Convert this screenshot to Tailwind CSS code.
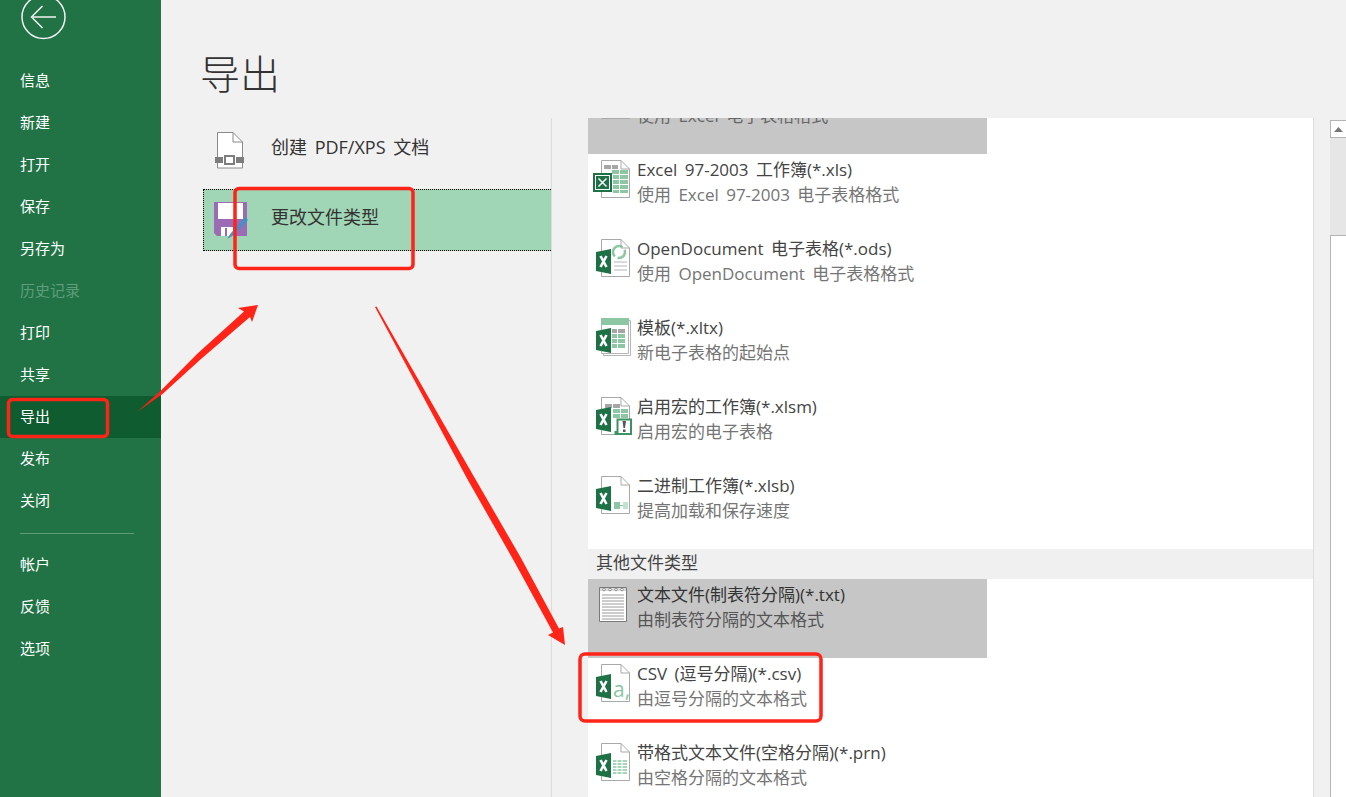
<!DOCTYPE html>
<html lang="zh-CN">
<head>
  <meta charset="UTF-8">
  <meta name="viewport" content="width=device-width, initial-scale=1.0">
  <title>导出</title>
  <script src="https://cdn.jsdelivr.net/npm/@tailwindcss/browser@4"></script>
</head>
<body class="relative w-[1346px] h-[797px] overflow-hidden bg-[#f1f1f1] [font-family:'Open_Sans','Noto_Sans_CJK_SC',sans-serif]">

<!-- shared icon parts -->
<svg class="hidden">
  <defs>
    <symbol id="page" viewBox="0 0 36 40">
      <path d="M6.500 1.500H26L34.500 10V38.500H6.500Z" fill="#fff" stroke="#a9a9a9"/>
      <path d="M26 1.500V10H34.500" fill="none" stroke="#a9a9a9"/>
    </symbol>
    <symbol id="badge" viewBox="0 0 36 40">
      <path d="M1 14L16 11V36L1 33Z" fill="#1e7145"/>
      <path d="M5.500 18L11.500 29M11.500 18L5.500 29" stroke="#fff" stroke-width="2.600" fill="none"/>
    </symbol>
  </defs>
</svg>

<div class="flex h-full">
  <!-- sidebar -->
  <nav class="w-[161px] shrink-0 h-full bg-[#217346] text-white text-[15px]">
    <div class="h-[59px] pl-[21px] -mt-[5px] pt-0">
      <svg width="46" height="46" viewBox="0 0 46 46" fill="none" stroke="#f2f2f2" stroke-width="1.500">
        <circle cx="22.500" cy="22" r="21.500"/>
        <path d="M12 22H35M21.500 11L10.500 22L21.500 33"/>
      </svg>
    </div>
    <ul class="mt-[6px]">
      <li class="h-[42px] pl-5 pb-[2px] flex items-center">信息</li>
      <li class="h-[42px] pl-5 pb-[2px] flex items-center">新建</li>
      <li class="h-[42px] pl-5 pb-[2px] flex items-center">打开</li>
      <li class="h-[42px] pl-5 pb-[2px] flex items-center">保存</li>
      <li class="h-[42px] pl-5 pb-[2px] flex items-center">另存为</li>
      <li class="h-[42px] pl-5 pb-[2px] flex items-center text-[#5f9d7b]">历史记录</li>
      <li class="h-[42px] pl-5 pb-[2px] flex items-center">打印</li>
      <li class="h-[42px] pl-5 pb-[2px] flex items-center">共享</li>
      <li class="h-[42px] pl-5 pb-[2px] flex items-center bg-[#0e5c2f]">导出</li>
      <li class="h-[42px] pl-5 pb-[2px] flex items-center">发布</li>
      <li class="h-[42px] pl-5 pb-[2px] flex items-center">关闭</li>
    </ul>
    <div class="ml-5 w-[114px] mt-[11px] mb-[10px] border-t border-[#5d9a78]"></div>
    <ul>
      <li class="h-[42px] pl-5 pb-[2px] flex items-center">帐户</li>
      <li class="h-[42px] pl-5 pb-[2px] flex items-center">反馈</li>
      <li class="h-[42px] pl-5 pb-[2px] flex items-center">选项</li>
    </ul>
  </nav>

  <!-- main -->
  <main class="flex-1 min-w-0 flex flex-col">
    <h1 class="h-[118px] shrink-0 pl-[39px] pt-[44px] text-[40px] leading-[60px] font-light text-[#333]">导出</h1>

    <div class="flex flex-1 min-h-0">
      <!-- export options -->
      <div class="w-[391px] shrink-0 pl-[42px] border-r border-[#dcdcdc]">
        <div class="h-[71px] flex items-center text-[18px] text-[#333]">
          <svg class="ml-[12px] mr-[27px] -mt-[6px]" width="29" height="37" viewBox="0 0 29 37" fill="none">
            <path d="M2.500 .5H18L27.500 10V36H2.500Z" fill="#fff" stroke="#8a8a8a"/>
            <path d="M18 .5V10H27.500" stroke="#8a8a8a"/>
            <path d="M0 25H8V31H0ZM21 25H29V31H21Z" fill="#7d7d7d"/>
            <path d="M10 24H19V32H10Z" fill="#fff" stroke="#7d7d7d" stroke-width="2"/>
          </svg>
          <span class="-mt-[12px] [word-spacing:3px]">创建 PDF/XPS 文档</span>
        </div>
        <div class="h-[62px] flex items-center text-[18px] text-[#333] bg-[#a0d5b5] border border-dotted border-black border-r-0">
          <svg class="ml-[10px] mr-[24px] -mt-[1px] overflow-visible" width="33" height="35" viewBox="0 0 33 35">
            <path d="M0 0H33V34H3L0 31Z" fill="#9c6bb6"/>
            <path d="M4 1H29V17H4Z" fill="#fff"/>
            <path d="M7 25H19V34H7Z" fill="#fff"/>
            <path d="M11 26H13V34H11Z" fill="#9c6bb6"/>
            <path d="M13 37L17 31L31 15L34 18L20 33Z" fill="#4a8fc4"/>
          </svg>
          <span class="-mt-[5px]">更改文件类型</span>
        </div>
      </div>

      <!-- file types -->
      <div class="w-[726px] shrink-0 ml-[36px] bg-white border-r border-[#dcdcdc] overflow-hidden text-[17px] leading-[25px] [word-spacing:3px]">
        <div class="-mt-[43px]">
          <div class="w-[399px] h-[79px] pl-[7px] pt-[3px] flex gap-[6px] bg-[#c6c6c6]">
            <svg class="mt-[2px]" width="36" height="40"><use href="#page"/><use href="#badge"/></svg>
            <div class="pt-[25px]"><p class="text-[#666]">使用 Excel 电子表格格式</p></div>
          </div>

          <div class="w-[399px] h-[79px] pl-[7px] pt-[3px] flex gap-[6px]">
            <svg class="mt-[2px] overflow-visible" width="36" height="40" viewBox="0 0 36 40">
              <use href="#page"/>
              <path d="M9 6H16V10H9ZM17 6H23V10H17Z" fill="#a6a6a6"/>
              <path d="M17 11H24V15H17ZM25 11H33V15H25ZM18 16H24V20H18ZM25 16H33V20H25ZM18 21H24V25H18ZM25 21H33V25H25ZM18 26H24V30H18ZM25 26H33V30H25ZM18 31H24V34H18ZM25 31H33V34H25Z" fill="#8cc6a3"/>
              <path d="M-1 15H16V32H-1Z" fill="#fff" stroke="#1e7145" stroke-width="2"/>
              <path d="M1 17H14V30H1Z" fill="#1e7145"/>
              <path d="M3.500 19.500L11.500 27.500M11.500 19.500L3.500 27.500" stroke="#fff" stroke-width="1.500"/>
            </svg>
            <div><p class="text-[#444]">Excel 97-2003 工作簿(*.xls)</p><p class="text-[#757575]">使用 Excel 97-2003 电子表格格式</p></div>
          </div>

          <div class="w-[399px] h-[79px] pl-[7px] pt-[3px] flex gap-[6px]">
            <svg class="mt-[2px]" width="36" height="40" viewBox="0 0 36 40">
              <use href="#page"/>
              <path d="M18 14A6 6 0 0 1 30 14A6 6 0 0 1 18 14" fill="none" stroke="#8cc6a3" stroke-width="2.500" stroke-dasharray="13 3"/>
              <path d="M19 24H32M19 28H32M19 32H32" stroke="#b5b5b5"/>
              <use href="#badge"/>
            </svg>
            <div><p class="text-[#444]">OpenDocument 电子表格(*.ods)</p><p class="text-[#757575]">使用 OpenDocument 电子表格格式</p></div>
          </div>

          <div class="w-[399px] h-[79px] pl-[7px] pt-[3px] flex gap-[6px]">
            <svg class="mt-[2px]" width="36" height="40" viewBox="0 0 36 40">
              <path d="M8.500 3.500H35.500V38.500H8.500Z" fill="#fff" stroke="#b5b5b5"/>
              <path d="M6.500 1.500H33.500V36.500H6.500Z" fill="#fff" stroke="#b5b5b5"/>
              <path d="M6 1H34V8H6Z" fill="#8cc6a3"/>
              <path d="M17 12H22V16H17ZM23 12H30V16H23Z" fill="#a6a6a6"/>
              <path d="M17 17H22V21H17ZM23 17H30V21H23ZM17 22H22V26H17ZM23 22H30V26H23ZM17 27H22V31H17ZM23 27H30V31H23Z" fill="#8cc6a3"/>
              <use href="#badge"/>
            </svg>
            <div><p class="text-[#444]">模板(*.xltx)</p><p class="text-[#757575]">新电子表格的起始点</p></div>
          </div>

          <div class="w-[399px] h-[79px] pl-[7px] pt-[3px] flex gap-[6px]">
            <svg class="mt-[2px] overflow-visible" width="36" height="40" viewBox="0 0 36 40">
              <use href="#page"/>
              <path d="M10 8H17V12H10ZM18 8H25V12H18Z" fill="#a6a6a6"/>
              <path d="M18 13H25V17H18ZM26 13H33V17H26ZM18 18H25V22H18ZM26 18H33V22H26Z" fill="#8cc6a3"/>
              <path d="M22.500 23.500H36V38H20.500V36H22.500Z" fill="#fff" stroke="#3c9362" stroke-width="2"/>
              <path d="M27.500 25H31L30 32H28.500ZM28 33.500H30.500V36H28Z" fill="#555"/>
              <use href="#badge"/>
            </svg>
            <div><p class="text-[#444]">启用宏的工作簿(*.xlsm)</p><p class="text-[#757575]">启用宏的电子表格</p></div>
          </div>

          <div class="w-[399px] h-[79px] pl-[7px] pt-[3px] flex gap-[6px]">
            <svg class="mt-[2px]" width="36" height="40" viewBox="0 0 36 40">
              <use href="#page"/>
              <path d="M19 27H25V34H19Z" fill="#8cc6a3"/>
              <path d="M25 30H28V31H25Z" fill="#8cc6a3"/>
              <path d="M28 27H33V34H28Z" fill="#bfe3cc"/>
              <use href="#badge"/>
            </svg>
            <div><p class="text-[#444]">二进制工作簿(*.xlsb)</p><p class="text-[#757575]">提高加载和保存速度</p></div>
          </div>

          <div class="h-[30px] pl-[8px] pb-[3px] flex items-center bg-[#f0f0f0] text-[#444]">其他文件类型</div>

          <div class="w-[399px] h-[79px] pl-[7px] pt-[3px] flex gap-[6px] bg-[#c6c6c6]">
            <svg class="mt-[2px]" width="36" height="40" viewBox="0 0 36 40">
              <path d="M4.500 3.500H31.500V37.500H4.500Z" fill="#fff" stroke="#7a7a7a"/>
              <path d="M5 4H31V7H5Z" fill="#d9d9d9"/>
              <path d="M7 11H29M7 14H29M7 17H29M7 20H29M7 23H29M7 26H29M7 29H29M7 32H29M7 35H29" stroke="#9a9a9a"/>
              <g fill="#fff" stroke="#8a8a8a"><circle cx="9" cy="5.500" r="1.300"/><circle cx="15" cy="5.500" r="1.300"/><circle cx="21" cy="5.500" r="1.300"/><circle cx="27" cy="5.500" r="1.300"/></g>
            </svg>
            <div><p class="text-[#333]">文本文件(制表符分隔)(*.txt)</p><p class="text-[#555]">由制表符分隔的文本格式</p></div>
          </div>

          <div class="w-[399px] h-[79px] pl-[7px] pt-[3px] flex gap-[6px]">
            <svg class="mt-[2px]" width="36" height="40" viewBox="0 0 36 40">
              <use href="#page"/>
              <text x="18" y="34" font-size="21" fill="#8cc6a3">a,</text>
              <use href="#badge"/>
            </svg>
            <div><p class="text-[#444]">CSV (逗号分隔)(*.csv)</p><p class="text-[#757575]">由逗号分隔的文本格式</p></div>
          </div>

          <div class="w-[399px] h-[79px] pl-[7px] pt-[3px] flex gap-[6px]">
            <svg class="mt-[2px]" width="36" height="40" viewBox="0 0 36 40">
              <use href="#page"/>
              <path d="M18 19H32M18 22H32M18 25H32M18 28H32M18 31H32" stroke="#8cc6a3" stroke-width="1.500"/>
              <path d="M22 18V32M27 18V32" stroke="#fff"/>
              <use href="#badge"/>
            </svg>
            <div><p class="text-[#444]">带格式文本文件(空格分隔)(*.prn)</p><p class="text-[#757575]">由空格分隔的文本格式</p></div>
          </div>
        </div>
      </div>

      <!-- scrollbar -->
      <div class="ml-[16px] pt-[2px] w-[16px] shrink-0 flex flex-col">
        <div class="h-[18px] flex items-center justify-center bg-white border border-r-0 border-[#b4b4b4]">
          <svg width="9" height="5" viewBox="0 0 9 5"><path d="M4.500 0L9 5H0Z" fill="#777"/></svg>
        </div>
        <div class="h-[97px] bg-[#e6e6e6]"></div>
        <div class="flex-1 bg-white border-l border-t border-[#b4b4b4]"></div>
      </div>
    </div>
  </main>
</div>

<!-- red annotations drawn over the screenshot -->
<svg class="absolute inset-0 pointer-events-none" width="1346" height="797" viewBox="0 0 1346 797" fill="none">
  <g stroke="#ff2318" stroke-width="3.500">
    <rect x="235" y="188.500" width="178" height="80" rx="4"/>
    <rect x="8.500" y="399.500" width="99" height="37" rx="4"/>
    <rect x="580" y="654" width="241" height="67" rx="5"/>
  </g>
  <g fill="#ff2318">
    <path d="M137 412L160 391.500L197 354L244 311.500L238 308L258 305L252 322L250 317L201 359L162.500 394Z"/>
    <path d="M375 307L376.500 306.500L473 475L521 558L559 628.500L563 627L565 645L548 635L553 632.500L514.500 562L467 478.500Z"/>
  </g>
</svg>
</body>
</html>
